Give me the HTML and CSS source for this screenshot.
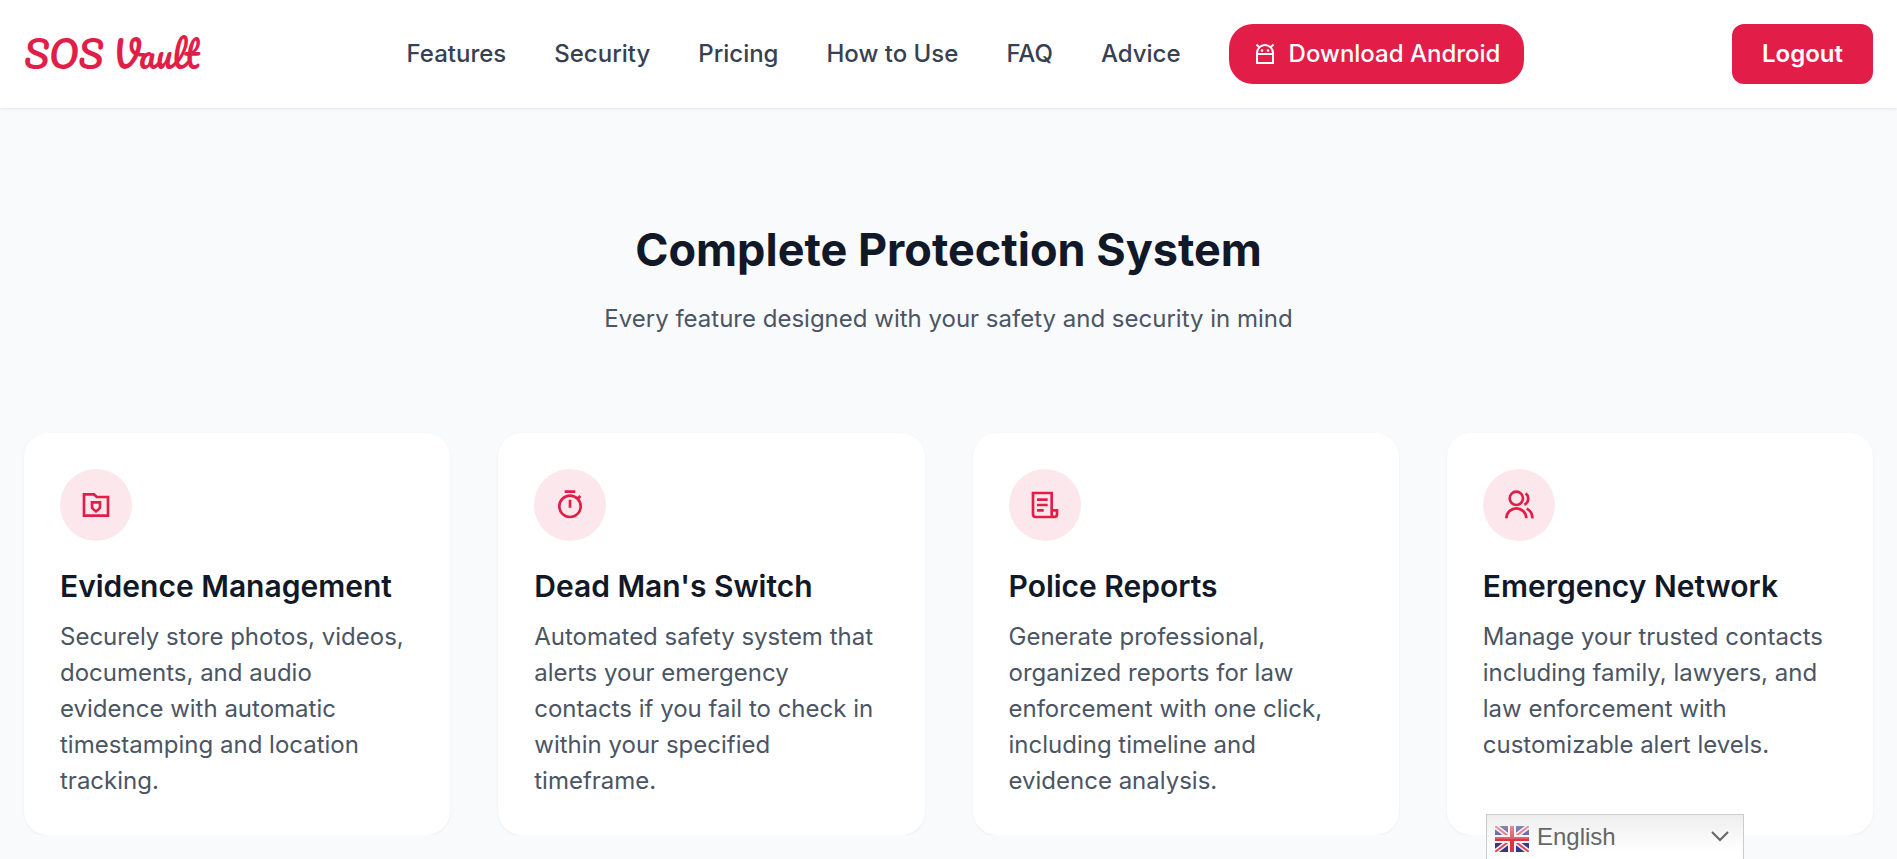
FILE: index.html
```html
<!DOCTYPE html>
<html lang="en">
<head>
<meta charset="utf-8">
<meta name="viewport" content="width=device-width, initial-scale=1">
<title>SOS Vault</title>
<link rel="stylesheet" href="styles.css">
</head>
<body>
<header class="header">
  <a class="logo" href="#">SOS Vault</a>
  <nav class="nav" aria-label="Main">
    <a class="nav-link" href="#features">Features</a>
    <a class="nav-link" href="#security">Security</a>
    <a class="nav-link" href="#pricing">Pricing</a>
    <a class="nav-link" href="#how">How to Use</a>
    <a class="nav-link" href="#faq">FAQ</a>
    <a class="nav-link" href="#advice">Advice</a>
    <a class="download" href="#download">
      <svg class="download-icon" viewBox="0 0 24 24" fill="none" stroke="currentColor" stroke-width="2" aria-hidden="true"><path d="M4 12h16v9H4zM4 12v-1a8 8 0 0 1 16 0v1M3.500 2.500l3 3M20.500 2.500l-3 3"/><circle cx="9" cy="8.500" r="1.300" fill="currentColor" stroke="none"/><circle cx="15" cy="8.500" r="1.300" fill="currentColor" stroke="none"/></svg>
      Download Android
    </a>
  </nav>
  <button class="logout" type="button">Logout</button>
</header>
<main class="features" id="features">
  <h1 class="features-title">Complete Protection System</h1>
  <p class="features-lead">Every feature designed with your safety and security in mind</p>
  <div class="cards">
    <article class="card">
      <div class="badge"><svg class="badge-icon" viewBox="0 0 24 24" fill="none" stroke="currentColor" stroke-width="2" aria-hidden="true"><path d="M3 4h7.500l2 2H21v14H3z"/><path d="M9 10h6v3.500c0 1.100-1 2-3 3.300-2-1.300-3-2.200-3-3.300z"/></svg></div>
      <h2 class="card-title">Evidence Management</h2>
      <p class="card-text">Securely store photos, videos, documents, and audio evidence with automatic timestamping and location tracking.</p>
    </article>
    <article class="card">
      <div class="badge"><svg class="badge-icon" viewBox="0 0 24 24" fill="none" stroke="currentColor" stroke-width="2" aria-hidden="true"><circle cx="12" cy="13" r="8"/><path d="M8 2h8M12 8v6M17.500 7.500l2.300-2.300"/></svg></div>
      <h2 class="card-title">Dead Man's Switch</h2>
      <p class="card-text">Automated safety system that alerts your emergency contacts if you fail to check in within your specified timeframe.</p>
    </article>
    <article class="card">
      <div class="badge"><svg class="badge-icon" viewBox="0 0 24 24" fill="none" stroke="currentColor" stroke-width="2" aria-hidden="true"><path d="M17 15V3H3v16a2 2 0 0 0 2 2h14a2 2 0 0 0 2-2v-3h-4v3a2 2 0 0 0 2 2M6 8h8M6 12h8M6 16h5"/></svg></div>
      <h2 class="card-title">Police Reports</h2>
      <p class="card-text">Generate professional, organized reports for law enforcement with one click, including timeline and evidence analysis.</p>
    </article>
    <article class="card">
      <div class="badge"><svg class="badge-icon" viewBox="0 0 24 24" fill="none" stroke="currentColor" stroke-width="2" aria-hidden="true"><circle cx="10" cy="7" r="5"/><path d="M2.500 22a7.500 7.500 0 0 1 15 0M17 3.300a5 5 0 0 1-1 8.500M17.800 14.700A8 8 0 0 1 22 22"/></svg></div>
      <h2 class="card-title">Emergency Network</h2>
      <p class="card-text">Manage your trusted contacts including family, lawyers, and law enforcement with customizable alert levels.</p>
    </article>
  </div>
</main>
<div class="language">
  <svg class="flag" viewBox="0 0 34 26" preserveAspectRatio="none" aria-hidden="true">
    <defs><linearGradient id="shine" x1="0" y1="0" x2="0" y2="1"><stop offset="0" stop-color="#fff" stop-opacity=".4"/><stop offset=".5" stop-color="#fff" stop-opacity=".2"/><stop offset=".5" stop-color="#fff" stop-opacity="0"/></linearGradient></defs>
    <path fill="#34368a" d="M0 0h34v26H0z"/>
    <path stroke="#f4f0f4" stroke-width="5" d="M0 0l34 26M34 0L0 26"/>
    <path stroke="#dc4a58" stroke-width="2" d="M0 0l34 26M34 0L0 26"/>
    <path stroke="#f4f0f4" stroke-width="8" d="M17 0v26M0 13h34"/>
    <path stroke="#d93545" stroke-width="4" d="M17 0v26M0 13h34"/>
    <path fill="url(#shine)" d="M0 0h34v26H0z"/>
  </svg>
  <select class="language-select" aria-label="Language"><option>English</option></select>
  <svg class="chevron" viewBox="0 0 18 12" fill="none" stroke="#666" stroke-width="2" aria-hidden="true"><path d="M1 1l8 8 8-8"/></svg>
</div>
</body>
</html>
```
FILE: styles.css
```css
* { box-sizing: border-box; }
body {
  margin: 0;
  background: #f9fafb;
  color: #111827;
  font-family: Inter, "Liberation Sans", sans-serif;
  font-size: 24px;
  line-height: 36px;
}
h1, h2, p { margin: 0; }
a { text-decoration: none; }
.header {
  display: flex;
  align-items: center;
  justify-content: space-between;
  padding: 24px;
  background: #fff;
  box-shadow: 0 1px 3px rgba(0, 0, 0, .08);
}
.logo {
  color: #e11d48;
  font: 400 36px/54px Pacifico, cursive;
  white-space: nowrap;
}
.nav { display: flex; align-items: center; gap: 48px; }
.nav-link { color: #374151; font-weight: 500; white-space: nowrap; }
.download {
  display: flex;
  align-items: center;
  gap: 12px;
  padding: 12px 24px;
  border-radius: 24px;
  background: #e11d48;
  color: #fff;
  font-weight: 500;
  white-space: nowrap;
}
.download-icon { width: 24px; height: 24px; }
.logout {
  padding: 12px 30px;
  border: 0;
  border-radius: 12px;
  background: #e11d48;
  color: #fff;
  font: inherit;
  font-weight: 600;
}
.features { padding: 115px 24px 0; }
.features-title {
  margin-bottom: 24px;
  font-size: 45px;
  line-height: 54px;
  font-weight: 700;
  text-align: center;
}
.features-lead { margin-bottom: 96px; color: #4b5563; text-align: center; }
.cards { display: grid; grid-template-columns: repeat(4, 1fr); gap: 48px; }
.card {
  padding: 36px;
  border-radius: 24px;
  background: #fff;
  box-shadow: 0 1px 3px rgba(0, 0, 0, .05);
}
.badge {
  display: flex;
  align-items: center;
  justify-content: center;
  width: 72px;
  height: 72px;
  margin-bottom: 24px;
  border-radius: 50%;
  background: #fce8ec;
  color: #e11d48;
}
.badge-icon { width: 32px; height: 32px; }
.card-title { margin-bottom: 12px; font-size: 30px; line-height: 42px; font-weight: 600; }
.card-text { color: #4b5563; }
.language {
  position: fixed;
  right: 153px;
  bottom: 0;
  display: flex;
  align-items: center;
  width: 258px;
  height: 45px;
  padding: 0 14px 0 8px;
  border: 1px solid #ccc;
  border-bottom: 0;
  background: linear-gradient(#eee, #fff 36px);
}
.flag { width: 34px; height: 26px; margin-top: 4px; }
.language-select {
  flex: 1;
  padding: 0 8px;
  border: 0;
  appearance: none;
  background: transparent;
  color: #666;
  font: 24px/36px "Liberation Sans", Arial, sans-serif;
}
.chevron { width: 18px; height: 12px; }
```
